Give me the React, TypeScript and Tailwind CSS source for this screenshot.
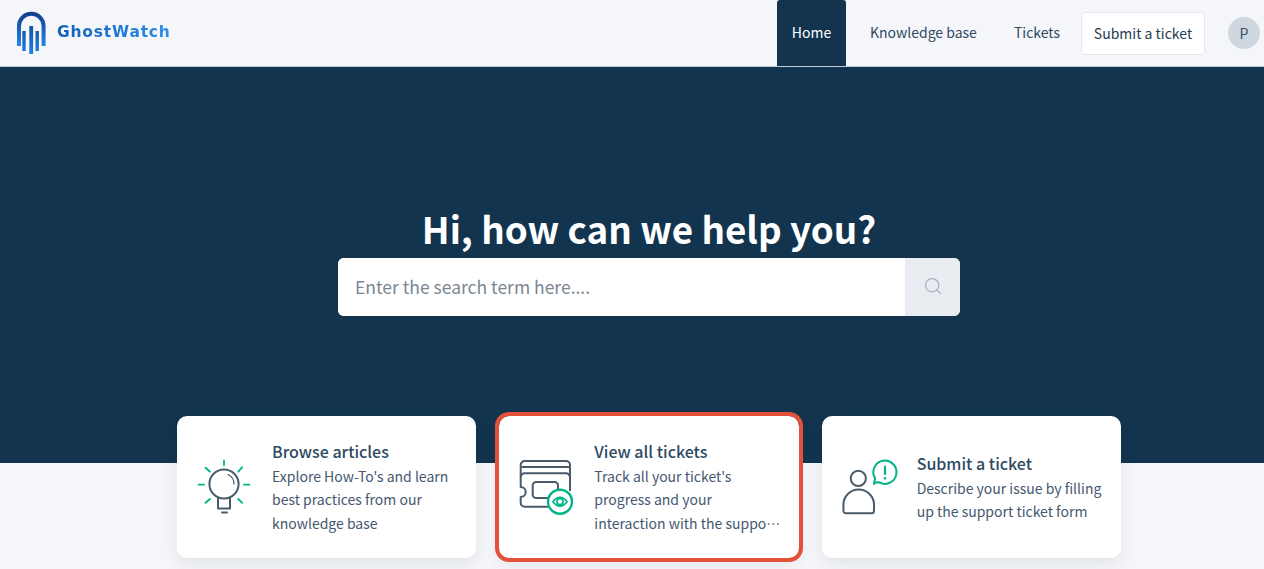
import React from "react";
import { Search } from "lucide-react";

const font = "font-['Noto_Sans_CJK_KR','Source_Sans_Pro',sans-serif]";

const Logo = () => (
  <svg width="36" height="46" viewBox="0 0 36 46" fill="none">
    <defs>
      <linearGradient id="lg" x1="0" y1="0" x2="0" y2="1">
        <stop offset="0" stopColor="#123f8e" />
        <stop offset="1" stopColor="#2488ea" />
      </linearGradient>
      <linearGradient id="lb" gradientUnits="userSpaceOnUse" x1="0" y1="14" x2="0" y2="44">
        <stop offset="0" stopColor="#14509f" />
        <stop offset="1" stopColor="#1f80e2" />
      </linearGradient>
    </defs>
    <path d="M5 36V16a12.3 12.3 0 0 1 24.6 0V36" stroke="url(#lg)" strokeWidth="4" />
    <rect x="8.3" y="21" width="3.4" height="20" fill="url(#lb)" />
    <rect x="15.3" y="16" width="3.8" height="28" fill="url(#lb)" />
    <rect x="21.5" y="21" width="3.4" height="20" fill="url(#lb)" />
  </svg>
);

const BulbIcon = () => (
  <svg width="56" height="56" viewBox="0 0 56 56" fill="none" strokeLinecap="round" className="overflow-visible">
    <g stroke="#00b388" strokeWidth="1.8">
      <path d="M28 1.500v4.500M2.500 25.700h5.500M48 25.700h5.500M9.500 8.800l4.500 3.900M46.200 8.200l-3.900 4.500M9.500 43.800l4.500-3.800M46.200 43.800L42.300 40" />
    </g>
    <g stroke="#4a5a6a" strokeWidth="2">
      <circle cx="28" cy="25" r="14.6" />
      <path d="M22 39v10.500h12V39" strokeLinejoin="round" />
      <path d="M26 53.500h5" />
      <path d="M32 15.500a10.500 10.500 0 0 1 6 9.500" strokeWidth="1.2" />
    </g>
  </svg>
);

const TicketIcon = () => (
  <svg width="56" height="56" viewBox="0 0 56 56" fill="none" className="overflow-visible">
    <g stroke="#4a5a6a" strokeWidth="2" strokeLinejoin="round">
      <path d="M2.700 18V6a4 4 0 0 1 4-4H48a4 4 0 0 1 4 4v12" />
      <path d="M3.500 8h47.800" />
      <path d="M6.700 14.300H48a4 4 0 0 1 4 4V32M38 47.700H6.700a4 4 0 0 1-4-4V38a5 5 0 0 0 0-10V18.300a4 4 0 0 1 4-4" />
      <rect x="14.700" y="23" width="25.300" height="16" rx="3.500" />
    </g>
    <circle cx="42" cy="42.700" r="12" fill="#fff" stroke="#00b388" strokeWidth="2.400" />
    <path d="M35 42.700c3.900-5.800 10.100-5.800 14 0-3.900 5.800-10.100 5.800-14 0z" stroke="#00b388" strokeWidth="1.700" />
    <circle cx="42" cy="42.700" r="3" stroke="#00b388" strokeWidth="1.700" />
  </svg>
);

const PersonIcon = () => (
  <svg width="56" height="56" viewBox="0 0 56 56" fill="none" className="overflow-visible">
    <g stroke="#4a5a6a" strokeWidth="2">
      <circle cx="17.300" cy="19.300" r="7.600" />
      <path d="M5 54.300h25.500a2.500 2.500 0 0 0 2.500-2.500v-6a15.300 15.300 0 0 0-30.600 0v6a2.500 2.500 0 0 0 2.600 2.500z" />
    </g>
    <path
      d="M34.500 23.500l-1.600 1.400 1.200-5.500A11.600 11.600 0 1 1 38 23.200z"
      stroke="#00b388"
      strokeWidth="2"
      strokeLinejoin="round"
    />
    <path d="M44 7.500v7.500" stroke="#00b388" strokeWidth="2.200" strokeLinecap="round" />
    <circle cx="44" cy="19.200" r="1.300" fill="#00b388" />
  </svg>
);

const cards = [
  {
    icon: <BulbIcon />,
    title: "Browse articles",
    text: "Explore How-To's and learn best practices from our knowledge base",
    active: false,
  },
  {
    icon: <TicketIcon />,
    title: "View all tickets",
    text: "Track all your ticket's progress and your interaction with the support team",
    active: true,
  },
  {
    icon: <PersonIcon />,
    title: "Submit a ticket",
    text: "Describe your issue by filling up the support ticket form",
    active: false,
  },
];

const App: React.FC = () => {
  return (
    <div className={`h-[569px] w-full overflow-hidden bg-[#f5f6f9] ${font}`}>
      <header className="flex h-[67px] items-stretch border-b border-[#c3ccd4] pl-[14px] pr-[4px]">
        <div className="flex items-center gap-[7px]">
          <Logo />
          <span className="bg-gradient-to-r from-[#1560b8] to-[#2b8cec] bg-clip-text font-['DejaVu_Sans',sans-serif] text-[15.5px] font-bold tracking-[0.8px] text-transparent">
            GhostWatch
          </span>
        </div>
        <nav className="ml-auto flex items-stretch text-[14px] leading-[23px] text-[#2f4a62]">
          <a className="flex w-[69px] items-center justify-center rounded-t-[3px] bg-[#12344e] pb-[2px] text-white">Home</a>
          <a className="flex items-center pb-[2px] pl-[24px] pr-[37px]">Knowledge base</a>
          <a className="flex items-center pb-[2px] pr-[21px]">Tickets</a>
          <div className="flex items-center pt-[1px]">
            <button className="flex h-[43px] w-[124px] items-center justify-center rounded-[4px] border border-[#e4e7ec] bg-white text-[#263c50]">
              Submit a ticket
            </button>
          </div>
          <div className="ml-[23px] flex items-center">
            <div className="flex h-[32px] w-[32px] items-center justify-center rounded-full bg-[#ced6df] text-[14px] text-[#3e5266]">P</div>
          </div>
        </nav>
      </header>

      <section className="flex h-[396px] flex-col items-center bg-[#12344e] pl-[34px] pt-[135px]">
        <h1 className="text-[36.8px] font-bold leading-[52px] text-white">Hi, how can we help you?</h1>
        <div className="mt-[4px] flex h-[58px] w-[622px] overflow-hidden rounded-[6px] bg-white">
          <input
            placeholder="Enter the search term here...."
            className="min-w-0 flex-1 bg-white px-[17px] text-[17.5px] text-[#44586f] outline-none placeholder:text-[#7b8692]"
          />
          <div className="flex w-[55px] items-center justify-center bg-[#e9edf2] pb-[3px]">
            <Search size={20} strokeWidth={1.5} className="text-[#a5b1bd]" />
          </div>
        </div>
      </section>

      <div className="-mt-[47px] flex justify-center gap-[23px] pl-[34px]">
        {cards.map((c) => (
          <div
            key={c.title}
            className={`flex h-[142px] w-[299.33px] items-center gap-[20px] rounded-[10px] bg-white pl-[19px] pr-[16px] shadow-[0_6px_16px_rgba(30,50,70,0.09)] ${
              c.active ? "outline-4 outline-[#e4503a]" : ""
            }`}
          >
            <div className="h-[56px] w-[56px] shrink-0">{c.icon}</div>
            <div className="min-w-0">
              <div className="mb-[2px] text-[16px] font-medium leading-[24px] text-[#2d4a63]">{c.title}</div>
              <p className="line-clamp-3 text-[14px] leading-[23.5px] text-[#44586f]">{c.text}</p>
            </div>
          </div>
        ))}
      </div>
    </div>
  );
};

export default App;
